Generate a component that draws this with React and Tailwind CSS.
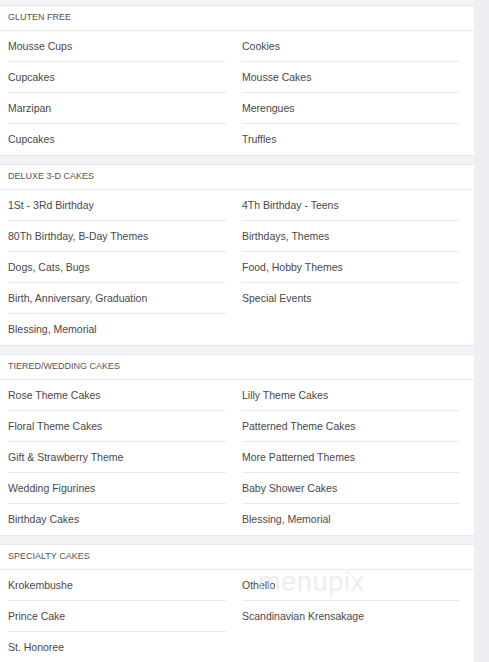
import React from "react";

const sections = [
  {
    title: "GLUTEN FREE",
    left: ["Mousse Cups", "Cupcakes", "Marzipan", "Cupcakes"],
    right: ["Cookies", "Mousse Cakes", "Merengues", "Truffles"],
  },
  {
    title: "DELUXE 3-D CAKES",
    left: ["1St - 3Rd Birthday", "80Th Birthday, B-Day Themes", "Dogs, Cats, Bugs", "Birth, Anniversary, Graduation", "Blessing, Memorial"],
    right: ["4Th Birthday - Teens", "Birthdays, Themes", "Food, Hobby Themes", "Special Events"],
  },
  {
    title: "TIERED/WEDDING CAKES",
    left: ["Rose Theme Cakes", "Floral Theme Cakes", "Gift & Strawberry Theme", "Wedding Figurines", "Birthday Cakes"],
    right: ["Lilly Theme Cakes", "Patterned Theme Cakes", "More Patterned Themes", "Baby Shower Cakes", "Blessing, Memorial"],
  },
  {
    title: "SPECIALTY CAKES",
    left: ["Krokembushe", "Prince Cake", "St. Honoree"],
    right: ["Othello", "Scandinavian Krensakage"],
    watermark: true,
  },
];

function Column({ items }) {
  return (
    <div className="flex flex-col divide-y divide-[#ebebeb]">
      {items.map((item, i) => (
        <div key={i} className="flex h-[31px] items-center pt-px text-[10.5px] text-[#484848]">
          {item}
        </div>
      ))}
    </div>
  );
}

function Section({ section }) {
  return (
    <section className="relative border-y border-[#e6e6ea] bg-white">
      <div className="flex h-[25px] items-center border-b border-[#ebebeb] px-2 text-[9px] text-[#555]">{section.title}</div>
      <div className="grid grid-cols-2 gap-x-4 pl-2 pr-[14px]">
        <Column items={section.left} />
        <Column items={section.right} />
      </div>
      {section.watermark && (
        <div className="pointer-events-none absolute left-[258px] top-[17px] text-[27px] font-light tracking-wide text-[#e4e4e4] opacity-60">
          menupix
        </div>
      )}
    </section>
  );
}

export default function App() {
  return (
    <div className="h-[662px] w-[489px] overflow-hidden bg-[#eeeef3] font-['Liberation_Sans',Arial,sans-serif]">
      <div className="flex w-[474px] flex-col gap-[8px] bg-[#f3f3f6] pt-[5px]">
        {sections.map((section) => (
          <Section key={section.title} section={section} />
        ))}
      </div>
    </div>
  );
}
